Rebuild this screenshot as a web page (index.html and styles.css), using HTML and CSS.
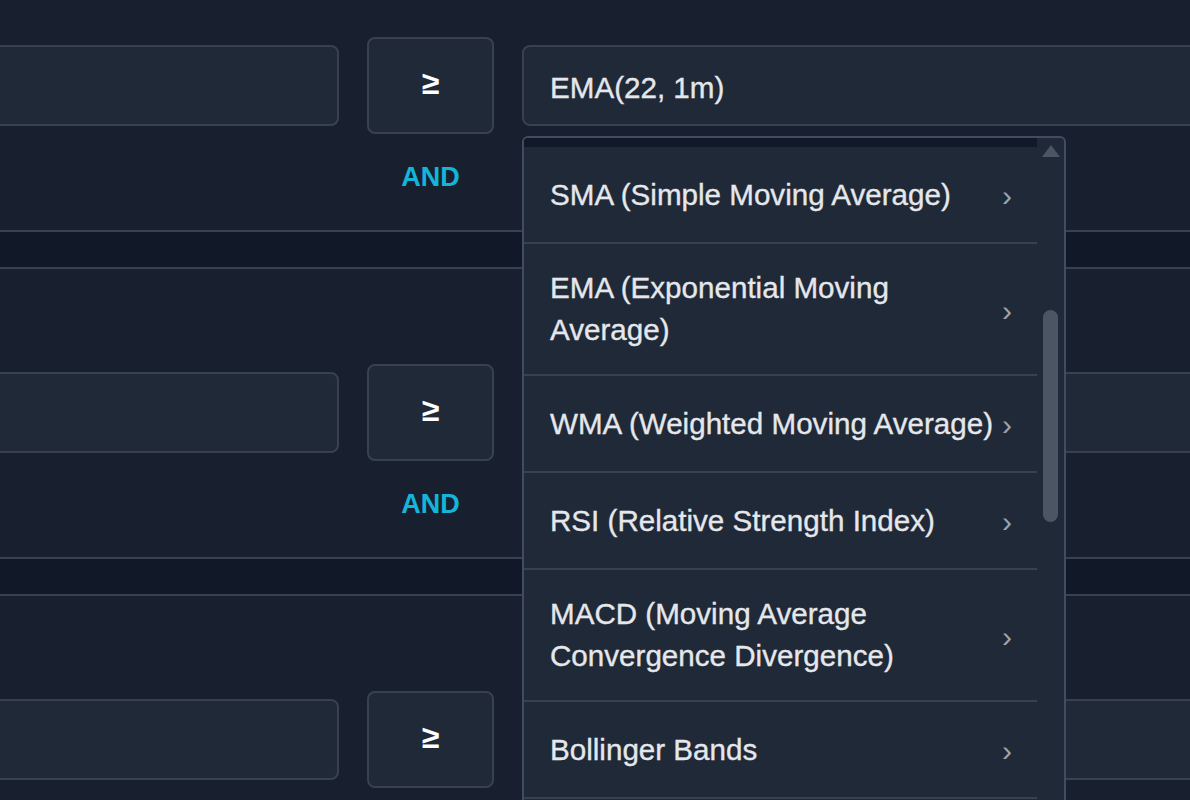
FILE: index.html
```html
<!DOCTYPE html>
<html lang="en">
<head>
    <meta charset="UTF-8">
    <meta name="viewport" content="width=device-width, initial-scale=1.0">
    <title>Strategy Conditions</title>
    <link rel="stylesheet" href="styles.css">
</head>
<body>
    <div class="conditions">

        <section class="condition-card">
            <div class="condition-row">
                <div class="field"></div>
                <div class="operator-col">
                    <div class="operator">&ge;</div>
                    <div class="joiner">AND</div>
                </div>
                <div class="value-col">
                    <div class="field value">EMA(22, 1m)</div>

                    <!-- indicator picker, open -->
                    <div class="dropdown">
                        <div class="dropdown-list">
                            <div class="list-top"></div>
                            <div class="dropdown-item"><span class="item-label">SMA (Simple Moving Average)</span><span class="chevron">&rsaquo;</span></div>
                            <div class="dropdown-item"><span class="item-label">EMA (Exponential Moving Average)</span><span class="chevron">&rsaquo;</span></div>
                            <div class="dropdown-item"><span class="item-label">WMA (Weighted Moving Average)</span><span class="chevron">&rsaquo;</span></div>
                            <div class="dropdown-item"><span class="item-label">RSI (Relative Strength Index)</span><span class="chevron">&rsaquo;</span></div>
                            <div class="dropdown-item"><span class="item-label">MACD (Moving Average Convergence Divergence)</span><span class="chevron">&rsaquo;</span></div>
                            <div class="dropdown-item"><span class="item-label">Bollinger Bands</span><span class="chevron">&rsaquo;</span></div>
                        </div>
                        <div class="scrollbar">
                            <div class="scroll-arrow"></div>
                            <div class="scroll-thumb"></div>
                        </div>
                    </div>
                </div>
            </div>
        </section>

        <section class="condition-card">
            <div class="condition-row">
                <div class="field"></div>
                <div class="operator-col">
                    <div class="operator">&ge;</div>
                    <div class="joiner">AND</div>
                </div>
                <div class="value-col">
                    <div class="field value"></div>
                </div>
            </div>
        </section>

        <section class="condition-card">
            <div class="condition-row">
                <div class="field"></div>
                <div class="operator-col">
                    <div class="operator">&ge;</div>
                </div>
                <div class="value-col">
                    <div class="field value"></div>
                </div>
            </div>
        </section>

    </div>
</body>
</html>
```

FILE: styles.css
```css
        body {
            font-family: "Liberation Sans", Arial, sans-serif;
            margin: 0;
            padding: 0;
            background-color: #111827;
            color: #e5e7eb;
            height: 800px;
            overflow: hidden;
        }
        .conditions {
            margin: -60px 0 0 -300px;
            width: 2000px;
        }
        .condition-card {
            background-color: #18202f;
            border-top: 2px solid #374151;
            border-bottom: 2px solid #374151;
            padding: 95px 0 37px;
            margin-bottom: 35px;
        }
        .condition-row {
            display: grid;
            grid-template-columns: 639px 127px 1000px;
            column-gap: 28px;
            align-items: start;
        }
        .field {
            box-sizing: border-box;
            height: 81px;
            margin-top: 8px;
            background-color: #1f2937;
            border: 2px solid #374151;
            border-radius: 8px;
        }
        .field.value {
            display: flex;
            align-items: center;
            padding: 4px 0 0 26px;
            font-size: 29.6px;
            -webkit-text-stroke: 0.35px #e5e7eb;
        }
        .operator-col {
            display: flex;
            flex-direction: column;
            align-items: center;
        }
        .operator {
            box-sizing: border-box;
            width: 127px;
            height: 97px;
            display: flex;
            align-items: center;
            justify-content: center;
            background-color: #1f2937;
            border: 2px solid #374151;
            border-radius: 8px;
            color: #ffffff;
            font-size: 32px;
            font-weight: bold;
            padding-bottom: 4px;
        }
        .joiner {
            margin-top: 28px;
            line-height: 31px;
            font-size: 27px;
            font-weight: bold;
            color: #13b6da;
        }
        .value-col {
            position: relative;
        }
        /* Dropdown styles */
        .dropdown {
            position: absolute;
            top: 99px;
            left: 0;
            width: 544px;
            height: 760px;
            box-sizing: border-box;
            display: flex;
            background-color: #1f2937;
            border: 2px solid #414c5f;
            border-radius: 6px;
            overflow: hidden;
            z-index: 10;
        }
        .dropdown-list {
            width: 513px;
            flex: none;
        }
        .list-top {
            height: 9px;
            background-color: #111827;
        }
        .dropdown-item {
            box-sizing: border-box;
            min-height: 97px;
            display: flex;
            align-items: center;
            padding: 23px 25px 23px 26px;
            border-bottom: 2px solid #374151;
            font-size: 29.6px;
            line-height: 42px;
        }
        .item-label {
            flex: 1;
            -webkit-text-stroke: 0.35px #e5e7eb;
        }
        .chevron {
            width: 10px;
            margin-left: 4px;
            padding-top: 3px;
            color: #9ca3af;
            font-size: 30px;
            line-height: 42px;
        }
        .scrollbar {
            flex: 1;
            display: flex;
            flex-direction: column;
            align-items: center;
            padding-top: 7px;
        }
        .scroll-arrow {
            width: 0;
            height: 0;
            border-left: 9px solid transparent;
            border-right: 9px solid transparent;
            border-bottom: 12px solid #4b5563;
        }
        .scroll-thumb {
            width: 15px;
            height: 212px;
            margin-top: 153px;
            background-color: #4b5563;
            border-radius: 8px;
        }
```
